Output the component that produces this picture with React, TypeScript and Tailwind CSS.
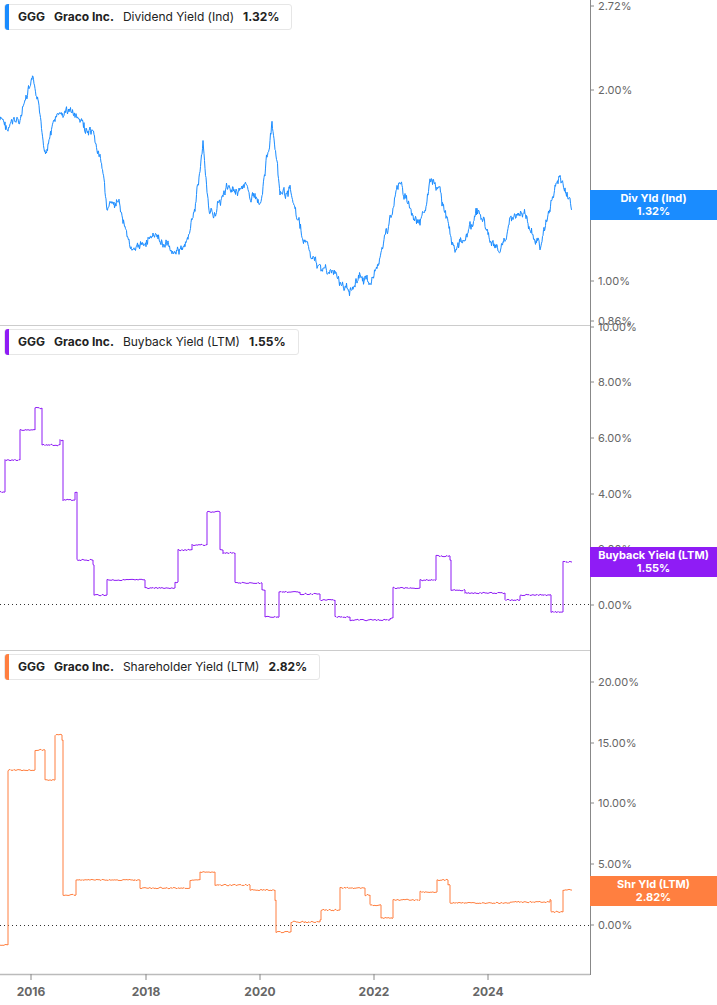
import React from "react";

type P = [number, number];
function rng(seed: number) { let s = seed; return () => { s = (s * 9301 + 49297) % 233280; return s / 233280; }; }
function noisy(a: P[], amp: number, seed: number): string {
  const r = rng(seed); const out: string[] = []; let w = 0;
  for (let i = 0; i < a.length - 1; i++) {
    const [x0, y0] = a[i], [x1, y1] = a[i + 1];
    for (let x = x0; x < x1; x += 0.5) {
      const t = (x - x0) / (x1 - x0);
      w = w * 0.85 + (r() - 0.5) * amp;
      out.push(`${x.toFixed(1)},${(y0 + (y1 - y0) * t + w + (r() - 0.5) * 4).toFixed(1)}`);
    }
  }
  return out.join(" ");
}
function steps(a: P[], amp: number, seed: number): string {
  const r = rng(seed); const out: string[] = [];
  for (let i = 0; i < a.length - 1; i++) {
    const [x0, y0] = a[i], [x1] = a[i + 1];
    for (let x = x0; x < x1; x += 1) out.push(`${x},${(y0 + (r() - 0.5) * amp).toFixed(1)}`);
    out.push(`${x1},${y0}`);
  }
  const l = a[a.length - 1]; out.push(`${l[0]},${l[1]}`);
  return out.join(" ");
}
const blue: P[] = [[0,120],[8,130],[20,118],[33,82],[45,150],[55,120],[70,110],[90,135],[100,160],[107,205],[120,210],[135,255],[150,235],[165,245],[185,250],[195,210],[203,145],[210,220],[225,190],[240,185],[260,200],[272,125],[280,200],[290,190],[300,230],[315,265],[330,270],[345,290],[360,275],[370,285],[385,240],[400,180],[410,210],[420,230],[430,185],[440,195],[455,250],[470,225],[480,210],[490,240],[500,255],[510,220],[520,215],[530,225],[540,250],[550,205],[560,175],[572,210]];
const purple: P[] = [[0,492],[5,460],[20,430],[35,408],[42,445],[60,440],[63,500],[75,492],[77,560],[93,565],[94,595],[106,595],[107,580],[145,588],[175,582],[178,550],[192,545],[207,512],[220,550],[223,553],[235,583],[262,590],[265,617],[278,617],[279,592],[300,594],[320,600],[335,617],[350,620],[390,618],[393,588],[420,580],[436,556],[450,560],[451,590],[465,593],[505,600],[520,595],[550,595],[551,612],[562,612],[563,562],[572,562]];
const orange: P[] = [[0,945],[7,945],[8,770],[20,770],[35,750],[45,780],[55,735],[62,740],[63,895],[75,895],[76,880],[135,880],[140,888],[190,880],[200,872],[215,885],[250,890],[262,890],[275,900],[276,932],[290,932],[291,922],[305,922],[320,920],[321,910],[333,910],[340,888],[365,895],[370,905],[380,905],[381,918],[392,918],[393,900],[420,892],[437,880],[448,885],[450,903],[510,902],[550,900],[551,912],[562,912],[563,890],[572,890]];

const ticks: [number, string][] = [[6,"2.72%"],[90,"2.00%"],[281,"1.00%"],[321,"0.86%"],[327,"10.00%"],[382,"8.00%"],[438,"6.00%"],[494,"4.00%"],[549,"2.00%"],[605,"0.00%"],[682,"20.00%"],[743,"15.00%"],[803,"10.00%"],[864,"5.00%"],[925,"0.00%"]];
const years: [number, string][] = [[31,"2016"],[146,"2018"],[260,"2020"],[374,"2022"],[488,"2024"]];

function Legend({ color, metric, value }: { color: string; metric: string; value: string }) {
  return (
    <div className="inline-flex items-center h-[26px] bg-white border border-[#e6e6e6] rounded-[3px] text-[12px] text-[#222] gap-[9px] pr-[12px]">
      <div className={`w-[4px] h-[26px] rounded-l-[3px] ${color}`} />
      <span className="font-bold">GGG</span>
      <span className="font-bold">Graco Inc.</span>
      <span>{metric}</span>
      <span className="font-bold">{value}</span>
    </div>
  );
}
function Badge({ color, a, b }: { color: string; a: string; b: string }) {
  return (
    <div className={`h-[30px] w-[127px] ${color} text-white text-[11px] font-bold leading-[13px] flex flex-col items-center justify-center`}>
      <span>{a}</span><span>{b}</span>
    </div>
  );
}

export default function App() {
  return (
    <div className="relative w-[717px] h-[1005px] bg-white overflow-hidden" style={{ fontFamily: "Inter, 'Noto Sans', sans-serif" }}>
      <svg className="absolute inset-0" width={717} height={1005}>
        <line x1={0} y1={325.5} x2={590} y2={325.5} stroke="#ccc" />
        <line x1={0} y1={650.5} x2={590} y2={650.5} stroke="#ccc" />
        <line x1={0} y1={974.5} x2={590} y2={974.5} stroke="#bbb" strokeWidth={1.5} />
        <line x1={590.5} y1={0} x2={590.5} y2={975} stroke="#888" />
        <line x1={0} y1={604.5} x2={590} y2={604.5} stroke="#333" strokeDasharray="1 3" />
        <line x1={0} y1={925.5} x2={590} y2={925.5} stroke="#333" strokeDasharray="1 3" />
        <polyline points={noisy(blue, 7, 7)} fill="none" stroke="#1a8cff" strokeWidth={1} />
        <polyline points={steps(purple, 1.5, 3)} fill="none" stroke="#8f1cf5" strokeWidth={1} />
        <polyline points={steps(orange, 1.5, 5)} fill="none" stroke="#ff7f40" strokeWidth={1} />
        {ticks.map(([y, t]) => (
          <g key={t + y}>
            <line x1={590} y1={y} x2={594} y2={y} stroke="#888" />
            <text x={598} y={y + 4} fontSize={11} fill="#666" fontFamily="Inter, sans-serif">{t}</text>
          </g>
        ))}
        {years.map(([x, t]) => (
          <g key={t}>
            <line x1={x} y1={974} x2={x} y2={980} stroke="#888" />
            <text x={x} y={996} fontSize={12} fontWeight={700} fill="#666" textAnchor="middle" fontFamily="Inter, sans-serif">{t}</text>
          </g>
        ))}
      </svg>
      <div className="absolute left-[4px] top-[4px]"><Legend color="bg-[#1a8cff]" metric="Dividend Yield (Ind)" value="1.32%" /></div>
      <div className="absolute left-[4px] top-[329px]"><Legend color="bg-[#8f1cf5]" metric="Buyback Yield (LTM)" value="1.55%" /></div>
      <div className="absolute left-[4px] top-[654px]"><Legend color="bg-[#ff7f40]" metric="Shareholder Yield (LTM)" value="2.82%" /></div>
      <div className="absolute left-[590px] top-[190px]"><Badge color="bg-[#1a8cff]" a="Div Yld (Ind)" b="1.32%" /></div>
      <div className="absolute left-[590px] top-[547px]"><Badge color="bg-[#8f1cf5]" a="Buyback Yield (LTM)" b="1.55%" /></div>
      <div className="absolute left-[590px] top-[876px]"><Badge color="bg-[#ff7f40]" a="Shr Yld (LTM)" b="2.82%" /></div>
    </div>
  );
}
